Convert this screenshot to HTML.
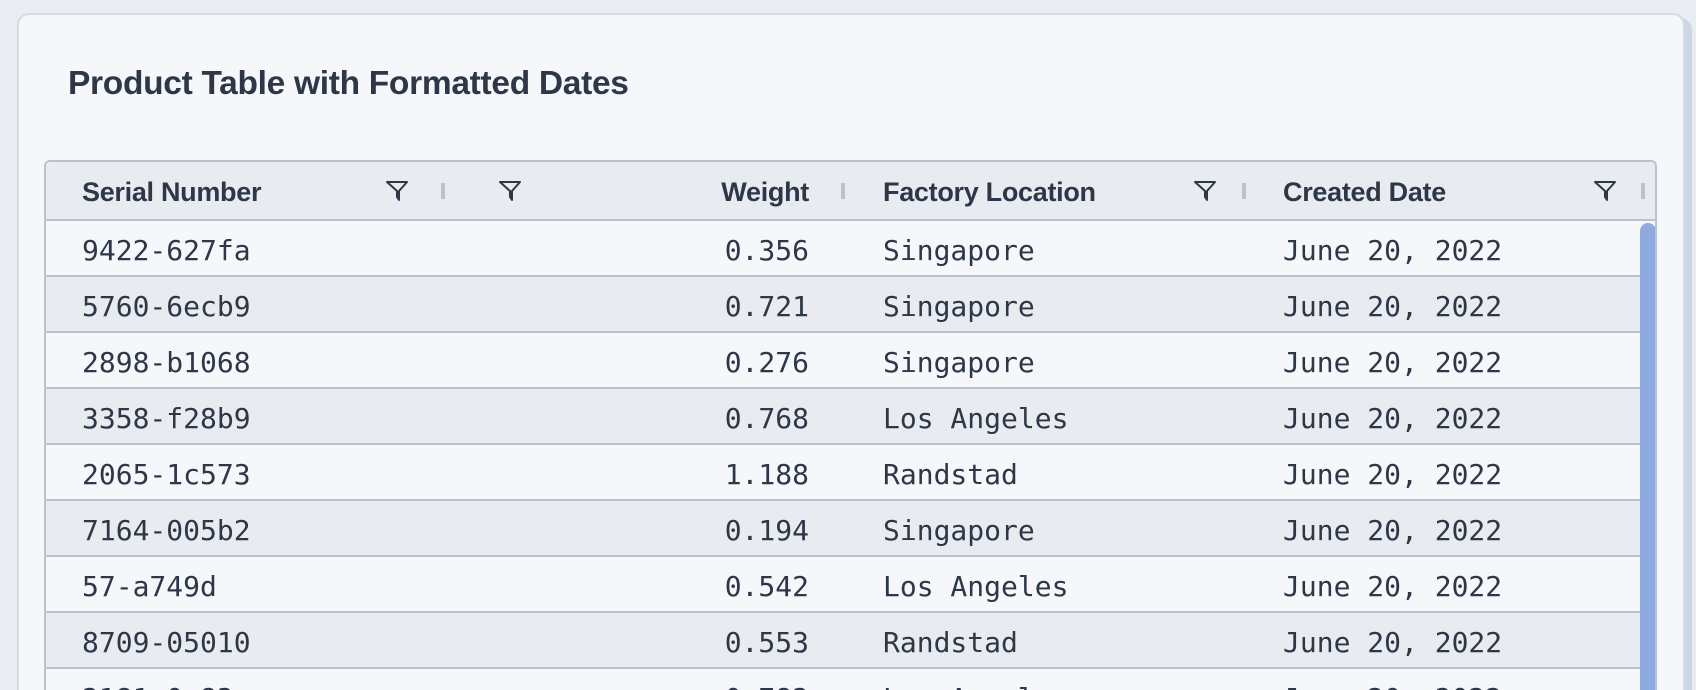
<!DOCTYPE html>
<html><head><style>
*{box-sizing:border-box;margin:0;padding:0}
html,body{width:1696px;height:690px;overflow:hidden}
body{background:#e9ecf0;font-family:"Liberation Sans",sans-serif;color:#2d3748;position:relative}
.shadow{position:absolute;left:22px;top:18px;width:1670px;height:672px;background:#ccd6e6;border-radius:12px 12px 0 0}
.card{position:absolute;left:17px;top:13px;width:1668px;height:677px;background:#f5f7fa;border:2px solid #d5dbe0;border-bottom:none;border-radius:12px 12px 0 0}
h1{position:absolute;left:68px;top:65px;font-size:33.5px;font-weight:bold;color:#2d3748;letter-spacing:-0.3px}
.table{position:absolute;left:44px;top:160px;width:1613px;height:530px;border:2px solid #b9c3cb;border-bottom:none;border-radius:6px 6px 0 0;overflow:hidden;background:#f5f7fa}
.head{position:absolute;left:0;top:0;width:100%;height:59px;background:#e8ecf0;border-bottom:2px solid #b9c3cb}
.ht{position:absolute;top:15px;font-size:27px;font-weight:bold;letter-spacing:-0.3px}
.f{position:absolute;top:18px;width:22px;height:22px}
.sep{position:absolute;top:21px;width:4px;height:16px;background:#b9c3cb}
.row{position:absolute;left:0;width:1596px;height:56px;border-bottom:2px solid #b9c3cb;font-family:"DejaVu Sans Mono","Liberation Mono",monospace;font-size:28px}
.row.alt{background:#e8ebef}
.row span{position:absolute;top:13px}
.w{text-align:right;width:200px}
.sb{position:absolute;left:1594px;top:61px;width:16px;height:480px;background:#8eaadf;border-radius:8px 8px 0 0}
</style></head><body>
<div class="shadow"></div>
<div class="card"></div>
<h1>Product Table with Formatted Dates</h1>
<div class="table">
<div class="head">
<div class="ht" style="left:36px">Serial Number</div>
<svg class="f" style="left:340px" viewBox="0 0 22 22"><path d="M1 2H21L13 11V20L11 17V11Z" fill="none" stroke="#2d3748" stroke-width="2" stroke-linejoin="round"/></svg>
<div class="sep" style="left:395px"></div>
<svg class="f" style="left:453px" viewBox="0 0 22 22"><path d="M1 2H21L13 11V20L11 17V11Z" fill="none" stroke="#2d3748" stroke-width="2" stroke-linejoin="round"/></svg>
<div class="ht" style="left:563px;width:200px;text-align:right">Weight</div>
<div class="sep" style="left:795px"></div>
<div class="ht" style="left:837px">Factory Location</div>
<svg class="f" style="left:1148px" viewBox="0 0 22 22"><path d="M1 2H21L13 11V20L11 17V11Z" fill="none" stroke="#2d3748" stroke-width="2" stroke-linejoin="round"/></svg>
<div class="sep" style="left:1196px"></div>
<div class="ht" style="left:1237px">Created Date</div>
<svg class="f" style="left:1548px" viewBox="0 0 22 22"><path d="M1 2H21L13 11V20L11 17V11Z" fill="none" stroke="#2d3748" stroke-width="2" stroke-linejoin="round"/></svg>
<div class="sep" style="left:1595px"></div>
</div>
<div class="row" style="top:59px"><span style="left:36px">9422-627fa</span><span class="w" style="left:563px">0.356</span><span style="left:837px">Singapore</span><span style="left:1237px">June 20, 2022</span></div>
<div class="row alt" style="top:115px"><span style="left:36px">5760-6ecb9</span><span class="w" style="left:563px">0.721</span><span style="left:837px">Singapore</span><span style="left:1237px">June 20, 2022</span></div>
<div class="row" style="top:171px"><span style="left:36px">2898-b1068</span><span class="w" style="left:563px">0.276</span><span style="left:837px">Singapore</span><span style="left:1237px">June 20, 2022</span></div>
<div class="row alt" style="top:227px"><span style="left:36px">3358-f28b9</span><span class="w" style="left:563px">0.768</span><span style="left:837px">Los Angeles</span><span style="left:1237px">June 20, 2022</span></div>
<div class="row" style="top:283px"><span style="left:36px">2065-1c573</span><span class="w" style="left:563px">1.188</span><span style="left:837px">Randstad</span><span style="left:1237px">June 20, 2022</span></div>
<div class="row alt" style="top:339px"><span style="left:36px">7164-005b2</span><span class="w" style="left:563px">0.194</span><span style="left:837px">Singapore</span><span style="left:1237px">June 20, 2022</span></div>
<div class="row" style="top:395px"><span style="left:36px">57-a749d</span><span class="w" style="left:563px">0.542</span><span style="left:837px">Los Angeles</span><span style="left:1237px">June 20, 2022</span></div>
<div class="row alt" style="top:451px"><span style="left:36px">8709-05010</span><span class="w" style="left:563px">0.553</span><span style="left:837px">Randstad</span><span style="left:1237px">June 20, 2022</span></div>
<div class="row" style="top:507px"><span style="left:36px">2181-0a83</span><span class="w" style="left:563px">0.782</span><span style="left:837px">Los Angeles</span><span style="left:1237px">June 20, 2022</span></div>
<div class="sb"></div>
</div>
</body></html>
